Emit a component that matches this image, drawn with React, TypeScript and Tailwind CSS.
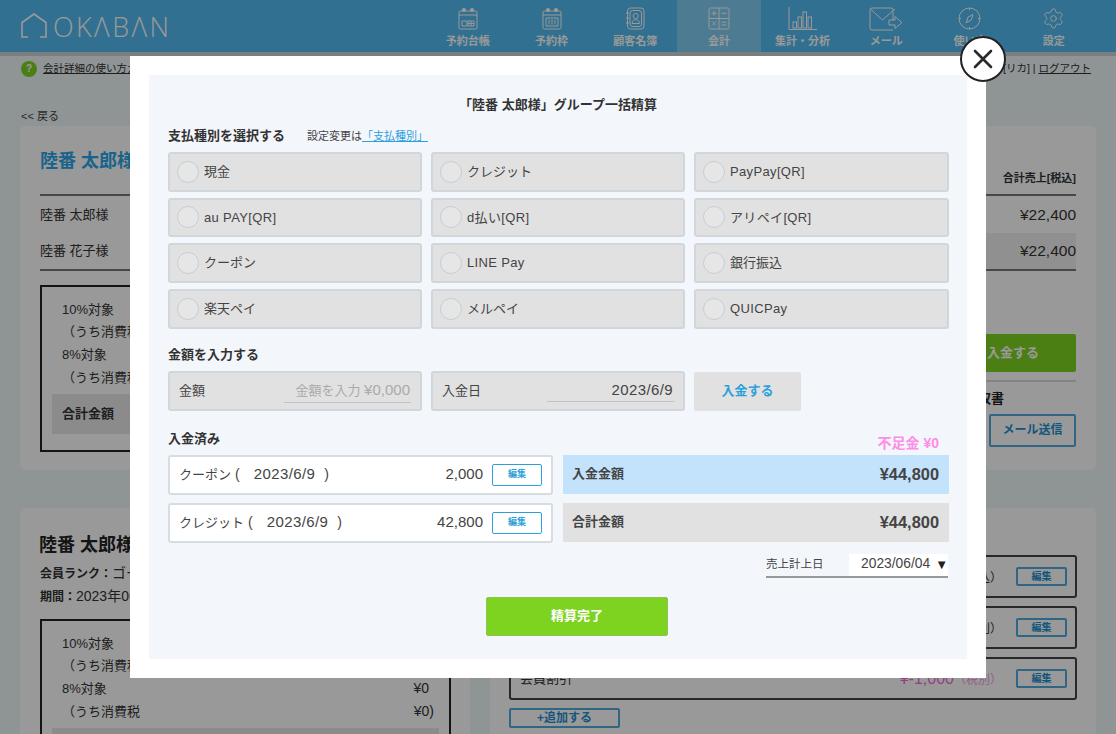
import { Settings } from "lucide-react";
import type { ReactNode } from "react";

const payTypes = [
  "現金",
  "クレジット",
  "PayPay[QR]",
  "au PAY[QR]",
  "d払い[QR]",
  "アリペイ[QR]",
  "クーポン",
  "LINE Pay",
  "銀行振込",
  "楽天ペイ",
  "メルペイ",
  "QUICPay",
];

function IconCalendar({ bars = false }: { bars?: boolean }) {
  return (
    <svg width="20" height="23" viewBox="0 0 20 23" fill="none" stroke="currentColor" strokeWidth="1">
      <rect x="1" y="4" width="18" height="18" rx="1.5" />
      <path d="M1 8h18" />
      <circle cx="6" cy="3" r="1.6" fill="currentColor" />
      <circle cx="14" cy="3" r="1.6" fill="currentColor" />
      {bars ? (
        <path d="M4 11h12v8H4zM7 12.5v5M10 12.5v5M13 12.5v5" />
      ) : (
        <path d="M4 14h5v5H4zM10 14h6v5h-6zM10 16.5h6M13 14v5" />
      )}
    </svg>
  );
}

function IconBook() {
  return (
    <svg width="20" height="23" viewBox="0 0 20 23" fill="none" stroke="currentColor" strokeWidth="1">
      <rect x="2.5" y="1" width="16.5" height="21" rx="3" />
      <rect x="5" y="3.5" width="11.5" height="16" rx="2.5" />
      <circle cx="10.7" cy="9" r="2.6" />
      <path d="M7 16.5c0-2.5 1.5-3.8 3.7-3.8s3.7 1.3 3.7 3.8zM1 6h3M1 11h3M1 16h3" />
    </svg>
  );
}

function IconCalc() {
  return (
    <svg width="22" height="23" viewBox="0 0 22 23" fill="none" stroke="currentColor" strokeWidth="1">
      <rect x="1" y="1" width="20" height="21" rx="1.5" />
      <path d="M11 1v21M1 11.5h20M3.5 6.3h5M6 3.8v5M13.5 6.3h5M4 14.5l4 4M8 14.5l-4 4M13.5 15.2h5M13.5 18h5" />
    </svg>
  );
}

function IconChart() {
  return (
    <svg width="30" height="24" viewBox="0 0 30 24" fill="none" stroke="currentColor" strokeWidth="1">
      <path d="M1 0v22.5h28" />
      <rect x="5" y="15" width="3.5" height="6" />
      <rect x="10" y="10" width="3.5" height="11" />
      <rect x="15" y="5" width="3.5" height="16" />
      <rect x="20" y="10" width="3.5" height="11" />
    </svg>
  );
}

function IconMail() {
  return (
    <svg width="34" height="24" viewBox="0 0 34 24" fill="none" stroke="currentColor" strokeWidth="1">
      <path d="M24 13V3a2 2 0 0 0-2-2H3a2 2 0 0 0-2 2v18a2 2 0 0 0 2 2h21M1.5 2l12 11L26 2" />
      <path d="M20 13h6v-3.5l7 6-7 6V18h-6z" />
    </svg>
  );
}

function IconCompass() {
  return (
    <svg width="23" height="23" viewBox="0 0 23 23" fill="none" stroke="currentColor" strokeWidth="1">
      <circle cx="11.5" cy="11.5" r="10.5" />
      <path d="M15 7.5l-1.8 5.6-5 2.6 1.8-5.6zM11.5 1v2M11.5 20v2M1 11.5h2M20 11.5h2" />
    </svg>
  );
}

const navItems: { label: string; icon: ReactNode; active?: boolean }[] = [
  { label: "予約台帳", icon: <IconCalendar /> },
  { label: "予約枠", icon: <IconCalendar bars /> },
  { label: "顧客名簿", icon: <IconBook /> },
  { label: "会計", icon: <IconCalc />, active: true },
  { label: "集計・分析", icon: <IconChart /> },
  { label: "メール", icon: <IconMail /> },
  { label: "使い方", icon: <IconCompass /> },
  { label: "設定", icon: <Settings size={23} strokeWidth={1} /> },
];

function Header() {
  return (
    <header className="flex h-[52px] bg-[#52bbf0] text-white shadow-[0_4px_0_rgba(0,0,0,0.15)] relative">
      <div className="flex w-[426px] items-center pl-[20px]">
        <svg width="28" height="28" viewBox="0 0 28 28" fill="none" stroke="currentColor" strokeWidth="1.6">
          <path d="M8 25H2V10.5L14 2l12 8.5V25h-6" />
        </svg>
        <span className="ml-[5px] text-[27px] font-light leading-none tracking-[2.4px] font-['Open_Sans',sans-serif]">
          OKΛBΛN
        </span>
      </div>
      {navItems.map((item) => (
        <div
          key={item.label}
          className={`flex w-[83.7px] flex-col items-center ${item.active ? "bg-[#7fcdf4]" : ""}`}
        >
          <div className="flex h-[25px] mt-[6px] items-center">{item.icon}</div>
          <span className="mt-[2px] text-[11px] font-bold leading-[16px]">{item.label}</span>
        </div>
      ))}
    </header>
  );
}

function TaxBox({ showTotal = true }: { showTotal?: boolean }) {
  const rows = [
    { label: "10%対象", value: "¥0", sub: false },
    { label: "（うち消費税", value: "¥0)", sub: true },
    { label: "8%対象", value: "¥0", sub: false },
    { label: "（うち消費税", value: "¥0)", sub: true },
  ];
  return (
    <div className="-mr-px border-2 border-[#222] px-[10px] pt-[11px] pb-[16px]">
      {rows.map((r) => (
        <div key={r.label + r.value} className="flex h-[22.7px] items-center justify-between px-[10px] text-[13px] text-[#333]">
          <span>{r.label}</span>
          <span className={`text-[14px] ${r.sub ? "-mr-[5px]" : ""}`}>{r.value}</span>
        </div>
      ))}
      <div className="mt-[5px] flex h-[40px] items-center justify-between bg-[#e8e8e8] px-[10px] text-[13px] font-bold text-[#333]">
        {showTotal && (
          <>
            <span>合計金額</span>
            <span>¥44,800</span>
          </>
        )}
      </div>
    </div>
  );
}

function ItemRow({ name, value, note, pink }: { name: string; value: string; note: string; pink?: boolean }) {
  return (
    <div className="flex h-[43px] items-center justify-between rounded-[3px] border-2 border-[#444] pl-[9px] pr-[8px] text-[13px] text-[#333]">
      <span>{name}</span>
      <div className="flex items-center gap-[14px]">
        <span className={pink ? "text-[#f070d8]" : ""}>
          <span className="text-[16px]">{value}</span>
          <span className={`text-[12px] ${pink ? "text-[#f2a0e4]" : ""}`}>{note}</span>
        </span>
        <span className="flex h-[19px] w-[51px] items-center justify-center rounded-[2px] border-2 border-[#52a9dc] text-[10px] font-bold text-[#1e90d0]">
          編集
        </span>
      </div>
    </div>
  );
}

function Background() {
  return (
    <>
      <Header />
      <div className="flex h-[33px] items-center justify-between pl-[21px] pr-[25px] text-[10.5px] text-[#333]">
        <div className="flex items-center gap-[6px]">
          <span className="flex h-[16px] w-[16px] items-center justify-center rounded-full bg-[#7ed321] text-[10px] font-bold text-white">?</span>
          <span className="underline">会計詳細の使い方ガイド</span>
        </div>
        <div>
          <span>オカバン [リカ] | </span>
          <span className="underline">ログアウト</span>
        </div>
      </div>
      <main className="px-[20px] pt-[24px]">
        <p className="ml-px h-[17px] text-[11px] leading-[14px] text-[#444]">&lt;&lt; 戻る</p>
        <section className="flex h-[344px] gap-[39px] rounded-[5px] bg-white px-[20px]">
          <div className="w-[411px]">
            <h2 className="h-[70px] border-b-2 border-[#777] pt-[21px] text-[18px] font-bold leading-[28px] text-[#2ba6e8]">陸番 太郎様</h2>
            <div className="flex h-[37px] items-center text-[13px] text-[#333]">陸番 太郎様</div>
            <div className="flex h-[38px] items-center border-b-2 border-[#777] text-[13px] text-[#333]">陸番 花子様</div>
            <div className="mt-[14px]">
              <TaxBox />
            </div>
          </div>
          <div className="flex-1">
            <div className="flex h-[70px] items-end justify-end border-b-2 border-[#777] pb-[8px] text-[11px] font-bold text-[#333]">合計売上[税込]</div>
            <div className="flex h-[37px] items-center justify-end text-[15.5px] text-[#333]">¥22,400</div>
            <div className="flex h-[38px] items-center justify-end border-b-2 border-[#777] bg-[#f0f0f0] text-[15.5px] text-[#333]">¥22,400</div>
            <div className="mt-[63px] flex h-[38px] items-center justify-center rounded-[2px] bg-[#7ed321] pl-[460px] text-[13px] font-bold text-white">入金する</div>
            <div className="mt-[8px] border-t-2 border-[#ddd] pt-[7px] pr-[72px] text-right text-[13px] font-bold text-[#222]">領収書</div>
            <div className="mt-[5px] flex justify-end">
              <span className="flex h-[33px] w-[87px] items-center justify-center rounded-[2px] border-2 border-[#52a9dc] text-[12px] font-bold text-[#1e90d0]">メール送信</span>
            </div>
          </div>
        </section>
        <div className="mt-[38px] flex gap-[20px]">
          <section className="h-[300px] w-[450px] rounded-[5px] bg-white px-[20px] pt-[25px]">
            <h2 className="-ml-px text-[18px] font-bold leading-[24px] text-[#222]">陸番 太郎様</h2>
            <p className="mt-[6px] text-[14px] leading-[20px] text-[#333]"><b className="text-[12px]">会員ランク：</b>ゴールド</p>
            <p className="mt-[2px] text-[14px] leading-[20px] text-[#333]"><b className="text-[12px]">期間：</b>2023年06月</p>
            <div className="mt-[12px]">
              <TaxBox showTotal={false} />
            </div>
          </section>
          <section className="h-[300px] flex-1 rounded-[5px] bg-white px-[19px] pt-[47px]">
            <div className="flex flex-col gap-[8px]">
              <ItemRow name="基本料金" value="¥22,400" note="（税込）" />
              <ItemRow name="オプション" value="¥1,000" note="（税別）" />
              <ItemRow name="会員割引" value="¥-1,000" note="（税別）" pink />
            </div>
            <div className="mt-[8px] flex h-[20px] w-[111px] items-center justify-center rounded-[2px] border-2 border-[#52a9dc] text-[12px] font-bold text-[#1e90d0]">+追加する</div>
          </section>
        </div>
      </main>
    </>
  );
}

function PayOption({ label }: { label: string }) {
  return (
    <label className="flex h-[39.5px] items-center rounded-[3px] border-2 border-[#cfd6dc] bg-[#e1e1e1] pl-[7px] text-[13px] text-[#444]">
      <span className="h-[22px] w-[22px] rounded-full border-[1.5px] border-[#c4cfd6] bg-[#e6e6e6]" />
      <span className={`ml-[5px] ${/[A-Za-z]/.test(label) ? "tracking-[0.35px]" : ""}`}>{label}</span>
    </label>
  );
}

function SectionLabel({ children }: { children: ReactNode }) {
  return <h3 className="text-[13px] font-bold leading-[18px] text-[#333]">{children}</h3>;
}

function Paid({ label, date, amount }: { label: string; date: string; amount: string }) {
  return (
    <div className="flex h-[40px] items-center justify-between rounded-[3px] border-2 border-[#d5dde3] bg-white pl-[9px] pr-[9px] text-[13px] text-[#444]">
      <span className="flex items-center">
        <span>{label}</span>
        <span className="ml-[4px] text-[14px]">(</span>
        <span className="ml-[14px] text-[15px] tracking-[0.4px]">{date}</span>
        <span className="ml-[9px] text-[14px]">)</span>
      </span>
      <div className="flex items-center gap-[9px]">
        <span className="text-[15px]">{amount}</span>
        <span className="flex h-[22px] w-[50px] items-center justify-center rounded-[2px] border border-[#2ba0dc] text-[9px] font-bold text-[#2ba0dc]">編集</span>
      </div>
    </div>
  );
}

function Summary({ label, amount, className }: { label: string; amount: string; className: string }) {
  return (
    <div className={`flex h-[39px] items-center justify-between pl-[9px] pr-[10px] font-bold text-[#444] ${className}`}>
      <span className="text-[13px]">{label}</span>
      <span className="text-[16.4px]">{amount}</span>
    </div>
  );
}

function Modal() {
  return (
    <div className="absolute left-[130px] top-[56px] h-[622px] w-[856px] bg-white p-[19px]">
      <div className="h-[584px] bg-[#f3f7fc] px-[19px] pt-[21px]">
        <h2 className="text-center text-[13px] font-bold leading-[18px] text-[#333]">「陸番 太郎様」グループ一括精算</h2>
        <div className="mt-[13px] flex items-center">
          <SectionLabel>支払種別を選択する</SectionLabel>
          <span className="ml-[22px] text-[11px] text-[#444]">
            設定変更は<a className="text-[#2ba0dc] underline">「支払種別」</a>
          </span>
        </div>
        <div className="mt-[7px] grid grid-cols-[254px_254px_255px] gap-x-[9px] gap-y-[6.2px]">
          {payTypes.map((t) => (
            <PayOption key={t} label={t} />
          ))}
        </div>
        <div className="mt-[17px]">
          <SectionLabel>金額を入力する</SectionLabel>
        </div>
        <div className="mt-[7px] grid grid-cols-[254px_254px_107px] gap-x-[9px]">
          <div className="flex h-[40px] items-center justify-between rounded-[3px] border-2 border-[#cfd6dc] bg-[#e1e1e1] pl-[9px] pr-[9px] text-[13px] text-[#444]">
            <span>金額</span>
            <span className="w-[127px] border-b border-[#bcc4ca] pr-px text-right leading-[22px] text-[#aaa]">
              金額を入力 <span className="text-[15px]">¥0,000</span>
            </span>
          </div>
          <div className="flex h-[40px] items-center justify-between rounded-[3px] border-2 border-[#cfd6dc] bg-[#e1e1e1] pl-[9px] pr-[9px] text-[13px] text-[#444]">
            <span>入金日</span>
            <span className="w-[127px] border-b border-[#bcc4ca] pr-px text-right leading-[22px] text-[15px] tracking-[0.4px]">2023/6/9</span>
          </div>
          <div className="mt-px flex h-[39px] items-center justify-center rounded-[2px] bg-[#e1e1e1] text-[13px] font-bold text-[#2ba0dc]">入金する</div>
        </div>
        <div className="mt-[19px] flex h-[21px] justify-between pr-[9px]">
          <SectionLabel>入金済み</SectionLabel>
          <span className="self-end text-[14px] font-bold leading-[16px] text-[#ff8ce6]">不足金 ¥0</span>
        </div>
        <div className="mt-[4px] grid grid-cols-[385px_386px] gap-x-[10px]">
          <div className="flex flex-col gap-[8px]">
            <Paid label="クーポン" date="2023/6/9" amount="2,000" />
            <Paid label="クレジット" date="2023/6/9" amount="42,800" />
          </div>
          <div className="flex flex-col gap-[9px]">
            <Summary label="入金金額" amount="¥44,800" className="bg-[#c3e2fb]" />
            <Summary label="合計金額" amount="¥44,800" className="bg-[#e1e1e1]" />
          </div>
        </div>
        <div className="mt-[11px] flex justify-end">
          <div className="flex w-[182px] items-center justify-between border-b-2 border-[#999]">
            <span className="text-[11.5px] text-[#444]">売上計上日</span>
            <span className="flex h-[22px] w-[99px] items-center justify-end bg-white text-[13.8px] text-[#444]">
              2023/06/04 <span className="ml-[5px] text-[13px] text-[#222]">▼</span>
            </span>
          </div>
        </div>
        <div className="mt-[19px] flex justify-center pl-[38px]">
          <button className="h-[39px] w-[182px] rounded-[2px] border border-[#8fc25a] bg-[#7ed321] text-[13px] font-bold text-white">精算完了</button>
        </div>
      </div>
      <button className="absolute -top-[20px] -right-[20px] flex h-[46px] w-[46px] items-center justify-center rounded-full border-2 border-[#222] bg-white">
        <svg width="20" height="20" viewBox="0 0 20 20" stroke="#2a2a2a" strokeWidth="2.6" strokeLinecap="round">
          <path d="M2 2l16 16M18 2L2 18" />
        </svg>
      </button>
    </div>
  );
}

export default function App() {
  return (
    <div className="relative h-[734px] w-[1116px] overflow-hidden bg-[#eff8f9] font-['Liberation_Sans','Noto_Sans_CJK_JP',sans-serif]">
      <Background />
      <div className="absolute inset-0 bg-black/40" />
      <Modal />
    </div>
  );
}
